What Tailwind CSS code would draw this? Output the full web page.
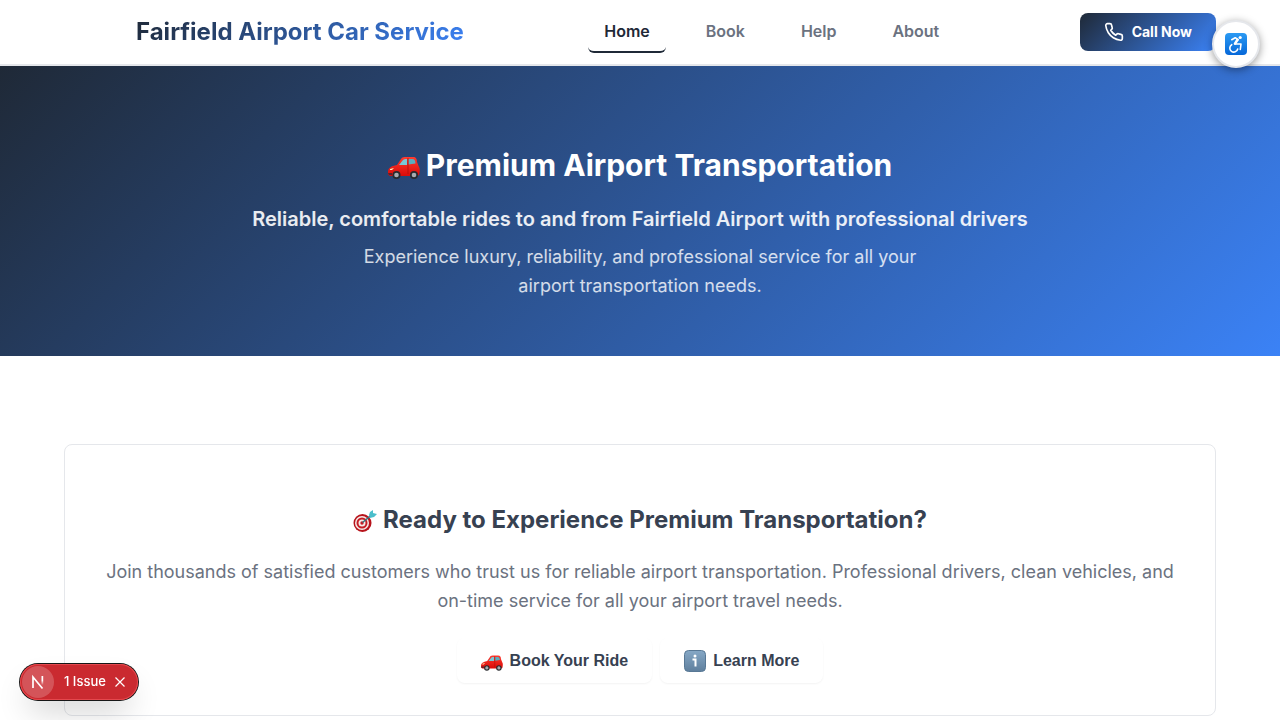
<!DOCTYPE html>
<html lang="en">
<head>
<meta charset="utf-8">
<meta name="viewport" content="width=device-width, initial-scale=1">
<title>Fairfield Airport Car Service</title>
<script src="https://cdn.jsdelivr.net/npm/@tailwindcss/browser@4"></script>
</head>
<body class="bg-white font-['Inter',sans-serif] text-[#374151] overflow-x-hidden min-h-screen">
<svg class="absolute size-0" aria-hidden="true">
  <defs>
    <linearGradient id="body" x1="0" y1="0" x2="0" y2="1"><stop offset="0" stop-color="#ff3b2f"/><stop offset="1" stop-color="#d90b08"/></linearGradient>
    <linearGradient id="blue" x1="0" y1="0" x2="0" y2="1"><stop offset="0" stop-color="#2b9af3"/><stop offset="1" stop-color="#0668d9"/></linearGradient>
    <linearGradient id="slate" x1="0" y1="0" x2="0" y2="1"><stop offset="0" stop-color="#86a8c6"/><stop offset="1" stop-color="#5f7f9d"/></linearGradient>
    <linearGradient id="stem" x1="0" y1="0" x2="0" y2="1"><stop offset="0.5" stop-color="#fff"/><stop offset="1" stop-color="#fff" stop-opacity="0"/></linearGradient>
    <symbol id="car" viewBox="0 0 32 32">
      <path d="M0 23c0-4 3-6 9-7l4-6c1-2 3-2 6-2h6c3 0 4 2 4 5l2 5c1 1 1 5 0 8l-2 1H2c-2-1-2-2-2-4z" fill="url(#body)"/>
      <path d="M11 16l4-5c1-1 2-1 4-1v6z" fill="#79c8d6"/>
      <path d="M20.500 10h4c2 0 3 2 3 4.500l-7 1z" fill="#5aaebe"/>
      <path d="M20 9v16" stroke="#a90d0a" stroke-width=".7"/>
      <path d="M0 24h4v2H1z" fill="#60202a"/>
      <path d="M2 20l4-1-2 2H2z" fill="#fff2ba"/>
      <circle cx="8.500" cy="26" r="4" fill="#282a2e"/><circle cx="8.500" cy="26" r="2.300" fill="#a7abb0"/>
      <circle cx="26" cy="26" r="4" fill="#282a2e"/><circle cx="26" cy="26" r="2.300" fill="#a7abb0"/>
    </symbol>
  </defs>
</svg>

<header class="h-[66px] border-b-2 border-[#e5e7eb] bg-white">
  <div class="mx-auto flex h-full max-w-[1152px] items-start justify-between">
    <a href="#" class="ml-[72px] mt-[14px] bg-linear-135/srgb from-[#1f2937] to-[#3b82f6] bg-clip-text text-2xl leading-9 font-bold text-transparent">Fairfield Airport Car Service</a>
    <nav class="mt-[11px] flex gap-6 text-base font-semibold text-[#6b7280]">
      <a href="#" class="rounded-md border-b-2 border-[#1f2937] px-4 py-2 text-[#1f2937]">Home</a>
      <a href="#" class="px-4 py-2">Book</a>
      <a href="#" class="px-4 py-2">Help</a>
      <a href="#" class="px-4 py-2">About</a>
    </nav>
    <button class="mt-[13px] flex h-[38px] items-center gap-2 rounded-lg bg-linear-135/srgb from-[#1f2937] to-[#3b82f6] px-6 text-sm font-bold text-white">
      <svg class="size-5" viewBox="0 0 24 24" fill="none" stroke="currentColor" stroke-width="2" stroke-linecap="round" stroke-linejoin="round"><path d="M22 16.920v3a2 2 0 0 1-2.180 2 19.790 19.790 0 0 1-8.630-3.070 19.500 19.500 0 0 1-6-6 19.790 19.790 0 0 1-3.070-8.670A2 2 0 0 1 4.110 2h3a2 2 0 0 1 2 1.720c.127.960.361 1.903.700 2.810a2 2 0 0 1-.450 2.110L8.090 9.910a16 16 0 0 0 6 6l1.270-1.270a2 2 0 0 1 2.110-.450c.907.339 1.850.573 2.810.700A2 2 0 0 1 22 16.920z"/></svg>
      Call Now
    </button>
  </div>
</header>

<main>
  <section class="flex h-[290px] flex-col items-center bg-linear-135/srgb from-[#1f2937] to-[#3b82f6] px-8 pt-[76px] text-center text-white">
    <h1 class="flex items-center gap-[6px] text-[30px] leading-[46px] font-bold"><svg class="size-8 shrink-0"><use href="#car"/></svg>Premium Airport Transportation</h1>
    <p class="mt-4 text-xl leading-[30px] font-semibold text-white/90">Reliable, comfortable rides to and from Fairfield Airport with professional drivers</p>
    <p class="mt-2 max-w-[600px] text-lg leading-[29px] text-white/80">Experience luxury, reliability, and professional service for all your airport transportation needs.</p>
  </section>

  <section class="mx-auto mt-[88px] max-w-[1152px] rounded-lg border border-[#e5e7eb] px-8 pt-[57px] pb-8 text-center">
    <h2 class="flex items-center justify-center gap-[6px] text-2xl leading-9 font-bold"><svg class="size-6 shrink-0" viewBox="0 0 24 24">
      <circle cx="9.500" cy="15" r="9" fill="#b7131b"/><circle cx="9" cy="15" r="7" fill="#f5e9e6"/><circle cx="9" cy="15" r="5.500" fill="#c51d25"/><circle cx="9" cy="15" r="3.500" fill="#f5e9e6"/><circle cx="9" cy="15" r="1.700" fill="#c51d25"/>
      <path d="M9.500 14.500l9-7.500" stroke="#357783" stroke-width="1.500"/><path d="M16 7l1-3 3-2v3l4 1-3 3-4 1z" fill="#4bbecb"/></svg>Ready to Experience Premium Transportation?</h2>
    <p class="mt-[19px] text-lg leading-[29px] text-[#6b7280]">Join thousands of satisfied customers who trust us for reliable airport transportation. Professional drivers, clean vehicles, and on-time service for all your airport travel needs.</p>
    <div class="mt-[23px] flex justify-center gap-2 font-['Liberation_Sans',sans-serif] text-base font-bold">
      <button class="flex h-[45px] items-center gap-[7px] rounded-lg px-6 shadow-[0_1px_2px_rgba(0,0,0,0.05)]"><svg class="size-[22px]"><use href="#car"/></svg>Book Your Ride</button>
      <button class="flex h-[45px] items-center gap-[7px] rounded-lg px-6 shadow-[0_1px_2px_rgba(0,0,0,0.05)]"><svg class="size-[22px]" viewBox="0 0 22 22"><rect x=".5" y=".5" width="21" height="21" rx="4" fill="url(#slate)" stroke="#587895"/><circle cx="11" cy="6" r="1.500" fill="#fff"/><path d="M8.500 9.500H11.500V16.500" stroke="#fff" stroke-width="2" fill="none"/></svg>Learn More</button>
    </div>
  </section>
</main>

<button aria-label="Accessibility options" class="fixed top-5 right-5 flex size-12 items-center justify-center rounded-full border-2 border-[#e5e7eb] bg-white shadow-[0_2px_8px_rgba(0,0,0,0.4)]">
  <svg class="size-[22px]" viewBox="0 0 22 22"><rect width="22" height="22" rx="4" fill="url(#blue)"/><circle cx="15.200" cy="4.500" r="1.600" fill="#fff"/><path d="M12.500 6.800L10 10.600" stroke="#fff" stroke-width="2.600" stroke-linecap="round"/><path d="M6.700 6.700l3.500-2 2.800 2M10.500 11h5.500l-.7 5.500M6.700 11.700a4 4 0 1 0 6 4.300" fill="none" stroke="#fff" stroke-width="1.600" stroke-linecap="round" stroke-linejoin="round"/></svg>
</button>

<div class="fixed bottom-5 left-5 flex h-9 items-center rounded-full bg-[#ca2a30] pr-3 pl-[2px] text-[13px] font-medium text-white shadow-[0_0_0_1px_#171717,inset_0_0_0_1px_#e5484d,0_16px_32px_-8px_rgba(0,0,0,0.24)]">
  <button aria-label="Open developer tools" class="flex size-8 items-center justify-center rounded-full bg-white/20">
    <svg class="size-4" viewBox="0 0 16 16" fill="none"><path d="M3 14V3L12.500 14.500" stroke="#fff" stroke-width="1.700"/><path d="M11.500 2h1.700v9h-1.700z" fill="url(#stem)"/></svg>
  </button>
  <button class="ml-[10px]">1 Issue</button>
  <button aria-label="Dismiss issue" class="ml-2"><svg class="size-3" viewBox="0 0 12 12" stroke="#fff" stroke-width="1.200"><path d="M1.500 1.500l9 9M10.500 1.500l-9 9"/></svg></button>
</div>
</body>
</html>
